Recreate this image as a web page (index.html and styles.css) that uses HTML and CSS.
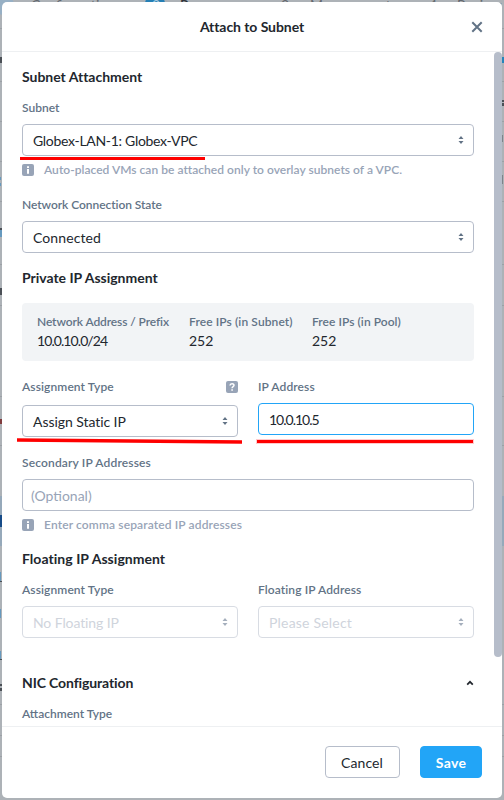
FILE: index.html
```html
<!DOCTYPE html>
<html lang="en">
<head>
<meta charset="utf-8">
<title>Attach to Subnet</title>
<link rel="stylesheet" href="styles.css">
</head>
<body>
<svg class="symbols" width="0" height="0" aria-hidden="true">
  <symbol id="sort" viewBox="0 0 6 10"><path d="M3 1 5.500 4h-5zM.5 6h5L3 9z" fill="currentColor"/></symbol>
  <symbol id="info" viewBox="0 0 12 12"><rect width="12" height="12" rx="2" fill="#98a4b7"/><path d="M5 2.200h2v1.900H5zM5 5.100h2v4.700H5z" fill="#fff"/></symbol>
</svg>
<svg class="backdrop" viewBox="0 0 504 800" aria-hidden="true">
  <rect width="504" height="800" fill="#adb2b7"/>
  <path d="M0 496h504v50H0z" fill="#96a9ba"/>
  <circle cx="4" cy="5" r="10" fill="#97b0c5"/>
  <path d="M0 28.500h504M0 81.500h504M0 121.500h504M0 161.500h504M0 201.500h504M0 264.500h504M0 305.500h504M0 396.500h504M0 445.500h504M0 704.500h504M0 735.500h504M0 756.500h504" stroke="#9ca1a6"/>
  <circle cx="155" cy="4" r="10" fill="#257fb5"/>
  <g fill="#4b5056">
    <rect y="57" width="2" height="6"/><rect y="228" width="2" height="2"/><rect y="288" width="2" height="7"/><rect y="581" width="2" height="1"/><rect y="659" width="2" height="1"/><rect y="684" width="2" height="2"/><rect y="688" width="2" height="3"/>
    <rect x="502" y="100" width="2" height="2"/><rect x="502" y="103" width="2" height="3"/>
  </g>
  <g fill="#7d8389"><rect x="502" y="135" width="1" height="7"/><rect x="502" y="175" width="1" height="9"/></g>
  <g fill="#6699be">
    <rect y="177" width="1" height="3"/><rect y="183" width="1" height="3"/><rect y="230" width="2" height="7"/><rect y="515" width="2" height="12" fill="#164b88"/><rect y="572" width="1" height="9"/><rect y="609" width="1" height="9"/><rect y="651" width="1" height="8"/><rect x="502" y="57" width="2" height="6" fill="#2584ba"/>
  </g>
  <rect y="419" width="2" height="5" fill="#803b3d"/>
  <g class="step-label">
    <text x="31" y="10">Configuration</text><text x="180" y="10" class="current">Resources</text>
    <text x="281" y="10">3</text><text x="310" y="10">Management</text><text x="429" y="10">4</text><text x="457" y="10">Review</text>
    <text x="152" y="10" fill="#a9cade">2</text>
  </g>
</svg>

<main class="modal">
  <header class="modal-header">
    <h1>Attach to Subnet</h1>
    <svg class="close" viewBox="0 0 12 12"><path d="m1.300 1.300 9.400 9.400m0-9.400-9.400 9.400" stroke="#627386" stroke-width="2"/></svg>
  </header>

  <section class="modal-body">
    <h2>Subnet Attachment</h2>
    <div class="field">
      <label>Subnet</label>
      <div class="control select marked"><span class="v-subnet">Globex-LAN-1: Globex-VPC</span><svg class="sort"><use href="#sort"/></svg></div>
      <p class="hint"><svg class="info"><use href="#info"/></svg><span class="h-auto">Auto-placed VMs can be attached only to overlay subnets of a VPC.</span></p>
    </div>
    <div class="field connection">
      <label class="t-state">Network Connection State</label>
      <div class="control select"><span class="v-connected">Connected</span><svg class="sort"><use href="#sort"/></svg></div>
    </div>

    <h2 class="private">Private IP Assignment</h2>
    <dl class="summary">
      <div><dt class="t-prefix">Network Address / Prefix</dt><dd class="v-prefix">10.0.10.0/24</dd></div>
      <div><dt class="t-free">Free IPs (in Subnet)</dt><dd>252</dd></div>
      <div><dt class="t-pool">Free IPs (in Pool)</dt><dd>252</dd></div>
    </dl>
    <div class="columns assignment">
      <div class="field">
        <div class="label-row"><label class="t-type">Assignment Type</label>
          <svg class="info" viewBox="0 0 12 12"><rect width="12" height="12" rx="2" fill="#98a4b7"/><path d="M4 4.500C4.100 2.200 8 2.200 8 4.300 8 5.800 6.100 5.500 6.100 7.200" fill="none" stroke="#fff" stroke-width="1.500"/><path d="M5.300 8.200h1.600v1.600H5.300z" fill="#fff"/></svg>
        </div>
        <div class="control select"><span class="v-static">Assign Static IP</span><svg class="sort"><use href="#sort"/></svg></div>
        <svg class="marker" viewBox="0 0 225 6"><path d="M0 2 225 4" stroke="#fe0000" stroke-width="3.400"/></svg>
      </div>
      <div class="field">
        <label class="t-ip">IP Address</label>
        <div class="control focused marked"><span class="v-ip">10.0.10.5</span></div>
      </div>
    </div>
    <div class="field secondary">
      <label class="t-secondary">Secondary IP Addresses</label>
      <div class="control placeholder">(Optional)</div>
      <p class="hint"><svg class="info"><use href="#info"/></svg><span class="h-comma">Enter comma separated IP addresses</span></p>
    </div>

    <h2 class="floating">Floating IP Assignment</h2>
    <div class="columns">
      <div class="field">
        <label class="t-type">Assignment Type</label>
        <div class="control select disabled"><span class="v-none">No Floating IP</span><svg class="sort"><use href="#sort"/></svg></div>
      </div>
      <div class="field">
        <label class="t-floating">Floating IP Address</label>
        <div class="control select disabled"><span class="v-please">Please Select</span><svg class="sort"><use href="#sort"/></svg></div>
      </div>
    </div>

    <div class="collapse">
      <h2 class="nic">NIC Configuration</h2>
      <svg class="caret" viewBox="0 0 8 6"><path d="m1.200 4.700 2.800-2.900 2.800 2.900" fill="none" stroke="#22272e" stroke-width="1.700"/></svg>
    </div>
    <div class="field"><label>Attachment Type</label></div>
    <div class="scrollbar"></div>
  </section>

  <footer class="modal-footer">
    <button class="cancel">Cancel</button>
    <button class="save">Save</button>
  </footer>
</main>
</body>
</html>
```
FILE: styles.css
```css
* { box-sizing: border-box; }
body {
  margin: 0;
  height: 800px;
  padding: 2px;
  overflow: hidden;
  font-family: Lato, "Open Sans", sans-serif;
  font-size: 14px;
  color: #22272e;
}
h1, h2, p, dl, dd { margin: 0; }
svg { display: block; flex: none; }
.symbols { position: absolute; }
.backdrop { position: absolute; left: 0; top: 0; width: 504px; height: 800px; }
.step-label { font-size: 14px; fill: #62676d; }
.step-label .current { fill: #30343a; font-weight: 600; }

.modal {
  position: relative;
  display: flex;
  flex-direction: column;
  width: 500px;
  height: 796px;
  border-radius: 5px;
  overflow: hidden;
  background: #fff;
}
.modal-header {
  position: relative;
  flex: none;
  display: flex;
  align-items: center;
  justify-content: center;
  height: 50px;
  border-bottom: 1px solid #eef0f2;
}
h1, h2 { font-size: 14px; line-height: 20px; font-weight: 700; }
h1 { letter-spacing: -.07px; }
h2 { height: 20px; letter-spacing: -.02px; }
.close { position: absolute; right: 19px; top: 19px; width: 12px; height: 12px; }

.modal-body {
  position: relative;
  flex: 1;
  min-height: 0;
  padding: 15px 28px 0 20px;
  overflow: hidden;
}
.field { position: relative; }
label, dt {
  display: block;
  font-size: 12px;
  line-height: 16px;
  font-weight: 600;
  color: #627386;
}
h2 + .field, h2 + .columns { margin-top: 13px; }
.control {
  position: relative;
  display: flex;
  align-items: center;
  justify-content: space-between;
  height: 32px;
  margin-top: 8px;
  padding: 2px 9px 0 10px;
  border: 1px solid #b6bdca;
  border-radius: 4px;
  line-height: 20px;
}
.sort { width: 6px; height: 10px; margin: -3px 0 0; color: #627386; }
.focused { border-color: #22a5f7; }
.placeholder { padding-left: 8px; color: #98a4b7; }
.disabled { border-color: #d8dce3; color: #cfd4dc; }
.disabled .sort { color: #a5afbd; }
.marked::after {
  content: "";
  position: absolute;
  left: -3px;
  top: 32px;
  width: 185px;
  height: 3px;
  background: #fe0000;
}
.focused.marked::after { left: -2px; top: 36px; width: 216px; box-shadow: 0 0 0 1px #ffc9cb; }
.marker { position: absolute; left: -5px; top: 59px; width: 225px; height: 6px; }

.hint {
  display: flex;
  align-items: center;
  gap: 10px;
  height: 16px;
  margin-top: 6px;
  font-size: 12px;
  line-height: 16px;
  font-weight: 600;
  color: #98a4b7;
}
.info { width: 12px; height: 12px; }
.connection { margin-top: 19px; }
.private { margin-top: 15px; }

.summary {
  display: flex;
  gap: 20px;
  height: 58px;
  margin-top: 15px;
  padding: 11px 15px;
  border-radius: 4px;
  background: #f2f4f6;
}
dt { white-space: nowrap; }
dd { line-height: 20px; margin-top: 1px; }

.columns { display: grid; grid-template-columns: 216px 216px; gap: 20px; }
.assignment { margin-top: 18px; }
.label-row { display: flex; align-items: center; justify-content: space-between; }
.label-row + .control { margin-top: 10px; }
.secondary { margin-top: 18px; }
.floating { margin-top: 16px; }
.collapse {
  display: flex;
  align-items: center;
  justify-content: space-between;
  margin: 35px 0 13px;
}
.caret { width: 8px; height: 6px; }
.scrollbar {
  position: absolute;
  right: 0;
  top: 0;
  width: 8px;
  height: 605px;
  border-radius: 4px;
  background: #b6bdca;
}

.v-subnet { letter-spacing: -.3px; }
.v-connected { letter-spacing: .1px; }
.v-prefix { letter-spacing: -.92px; }
.v-ip { letter-spacing: -1px; }
.v-static { letter-spacing: -.06px; }
.v-none { letter-spacing: -.1px; }
.v-please { letter-spacing: .2px; }
.t-state { letter-spacing: -.06px; }
.t-prefix { width: 132px; letter-spacing: -.11px; }
.t-free { width: 103px; letter-spacing: .1px; }
.t-pool { letter-spacing: .05px; }
.t-type, .t-ip, .t-floating { letter-spacing: .1px; }
.t-secondary { letter-spacing: .15px; }
.h-auto { letter-spacing: .03px; }
.h-comma { letter-spacing: .13px; }
.floating { letter-spacing: .04px; }
.nic { letter-spacing: -.12px; }

.modal-footer {
  flex: none;
  display: flex;
  justify-content: flex-end;
  gap: 20px;
  height: 72px;
  padding: 19px 20px 0;
  border-top: 1px solid #eef0f2;
}
button {
  height: 32px;
  padding: 0;
  border: 1px solid #b6bdca;
  border-radius: 4px;
  background: #fff;
  font: inherit;
  color: #22272e;
}
.cancel { width: 75px; padding-right: 1px; letter-spacing: .12px; }
.save { width: 62px; border-color: #22a5f7; background: #22a5f7; color: #fff; font-weight: 700; letter-spacing: .3px; }
```
